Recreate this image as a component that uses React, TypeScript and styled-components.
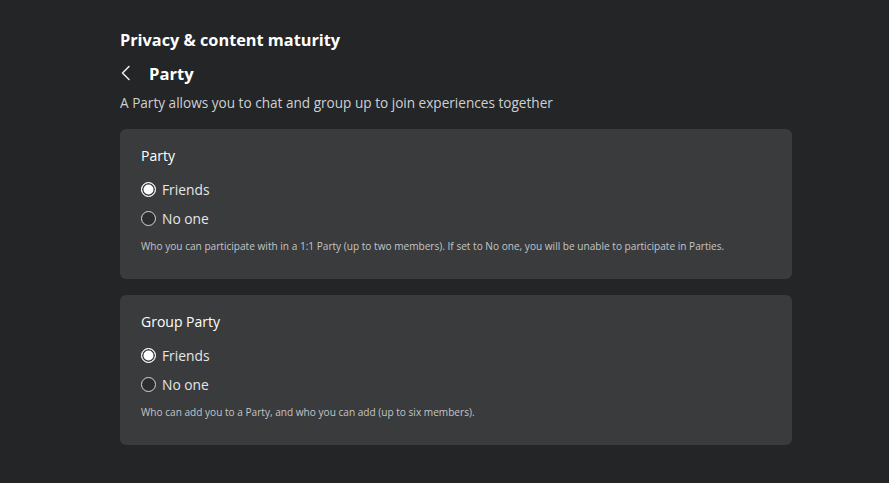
import React from "react";
import styled, { createGlobalStyle } from "styled-components";

const Global = createGlobalStyle`
  html, body { margin: 0; padding: 0; background: #232527; }
  body { font-family: "Open Sans", "Liberation Sans", sans-serif; color: #f2f2f2; }
  * { box-sizing: border-box; }
`;

const Page = styled.div`
  width: 889px;
  height: 483px;
  padding: 28px 97px 0 120px;
  display: flex;
  flex-direction: column;
`;

const Title = styled.h1`
  margin: 0;
  font-size: 16.3px;
  font-weight: 700;
  line-height: 24px;
  color: #ffffff;
`;

const SubHeader = styled.div`
  display: flex;
  align-items: center;
  gap: 16px;
  margin-top: 9px;
  height: 24px;
`;

const BackButton = styled.button`
  background: none;
  border: 0;
  padding: 0;
  width: 13px;
  height: 18px;
  display: flex;
  align-items: center;
  color: #e8e8e8;
  cursor: pointer;
`;

const SubTitle = styled.h2`
  margin: 0;
  font-size: 16.6px;
  font-weight: 700;
  color: #ffffff;
`;

const Description = styled.p`
  margin: 8px 0 0;
  font-size: 13.6px;
  line-height: 20px;
  color: #cfd0d1;
`;

const Cards = styled.div`
  margin-top: 16px;
  display: flex;
  flex-direction: column;
  gap: 16px;
`;

const Card = styled.section`
  background: #393b3d;
  border-radius: 6px;
  height: 150px;
  padding: 17px 21px 0;
  display: flex;
  flex-direction: column;
`;

const CardTitle = styled.h3`
  margin: 0;
  font-size: 14px;
  font-weight: 500;
  line-height: 20px;
  color: #ffffff;
`;

const Options = styled.div`
  margin-top: 13px;
  display: flex;
  flex-direction: column;
  gap: 9.5px;
`;

const OptionRow = styled.label`
  display: flex;
  align-items: center;
  gap: 6px;
  height: 20px;
  font-size: 13.8px;
  color: #e6e6e6;
  cursor: pointer;
`;

const RadioCircle = styled.span<{ $checked: boolean }>`
  width: 15px;
  height: 15px;
  border-radius: 50%;
  border: 1.5px solid ${(p) => (p.$checked ? "#ffffff" : "#d8d8d8")};
  background: ${(p) => (p.$checked ? "#ffffff" : "#2b2d2f")};
  box-shadow: ${(p) => (p.$checked ? "inset 0 0 0 1.5px #393b3d" : "none")};
  flex-shrink: 0;
`;

const Help = styled.p`
  margin: 9px 0 0;
  font-size: 10.1px;
  line-height: 16px;
  color: #c4c5c6;
`;

type Section = { title: string; selected: string; help: string };

const sections: Section[] = [
  {
    title: "Party",
    selected: "Friends",
    help: "Who you can participate with in a 1:1 Party (up to two members). If set to No one, you will be unable to participate in Parties.",
  },
  {
    title: "Group Party",
    selected: "Friends",
    help: "Who can add you to a Party, and who you can add (up to six members).",
  },
];

const choices = ["Friends", "No one"];

export default function App() {
  return (
    <>
      <Global />
      <Page>
        <Title>Privacy &amp; content maturity</Title>
        <SubHeader>
          <BackButton aria-label="Back">
            <svg width="11" height="16" viewBox="0 0 11 16" fill="none">
              <path d="M9 1.5L2.5 8L9 14.5" stroke="currentColor" strokeWidth="1.6" strokeLinecap="round" strokeLinejoin="round" />
            </svg>
          </BackButton>
          <SubTitle>Party</SubTitle>
        </SubHeader>
        <Description>A Party allows you to chat and group up to join experiences together</Description>
        <Cards>
          {sections.map((s) => (
            <Card key={s.title}>
              <CardTitle>{s.title}</CardTitle>
              <Options>
                {choices.map((c) => (
                  <OptionRow key={c}>
                    <RadioCircle $checked={c === s.selected} />
                    {c}
                  </OptionRow>
                ))}
              </Options>
              <Help>{s.help}</Help>
            </Card>
          ))}
        </Cards>
      </Page>
    </>
  );
}
